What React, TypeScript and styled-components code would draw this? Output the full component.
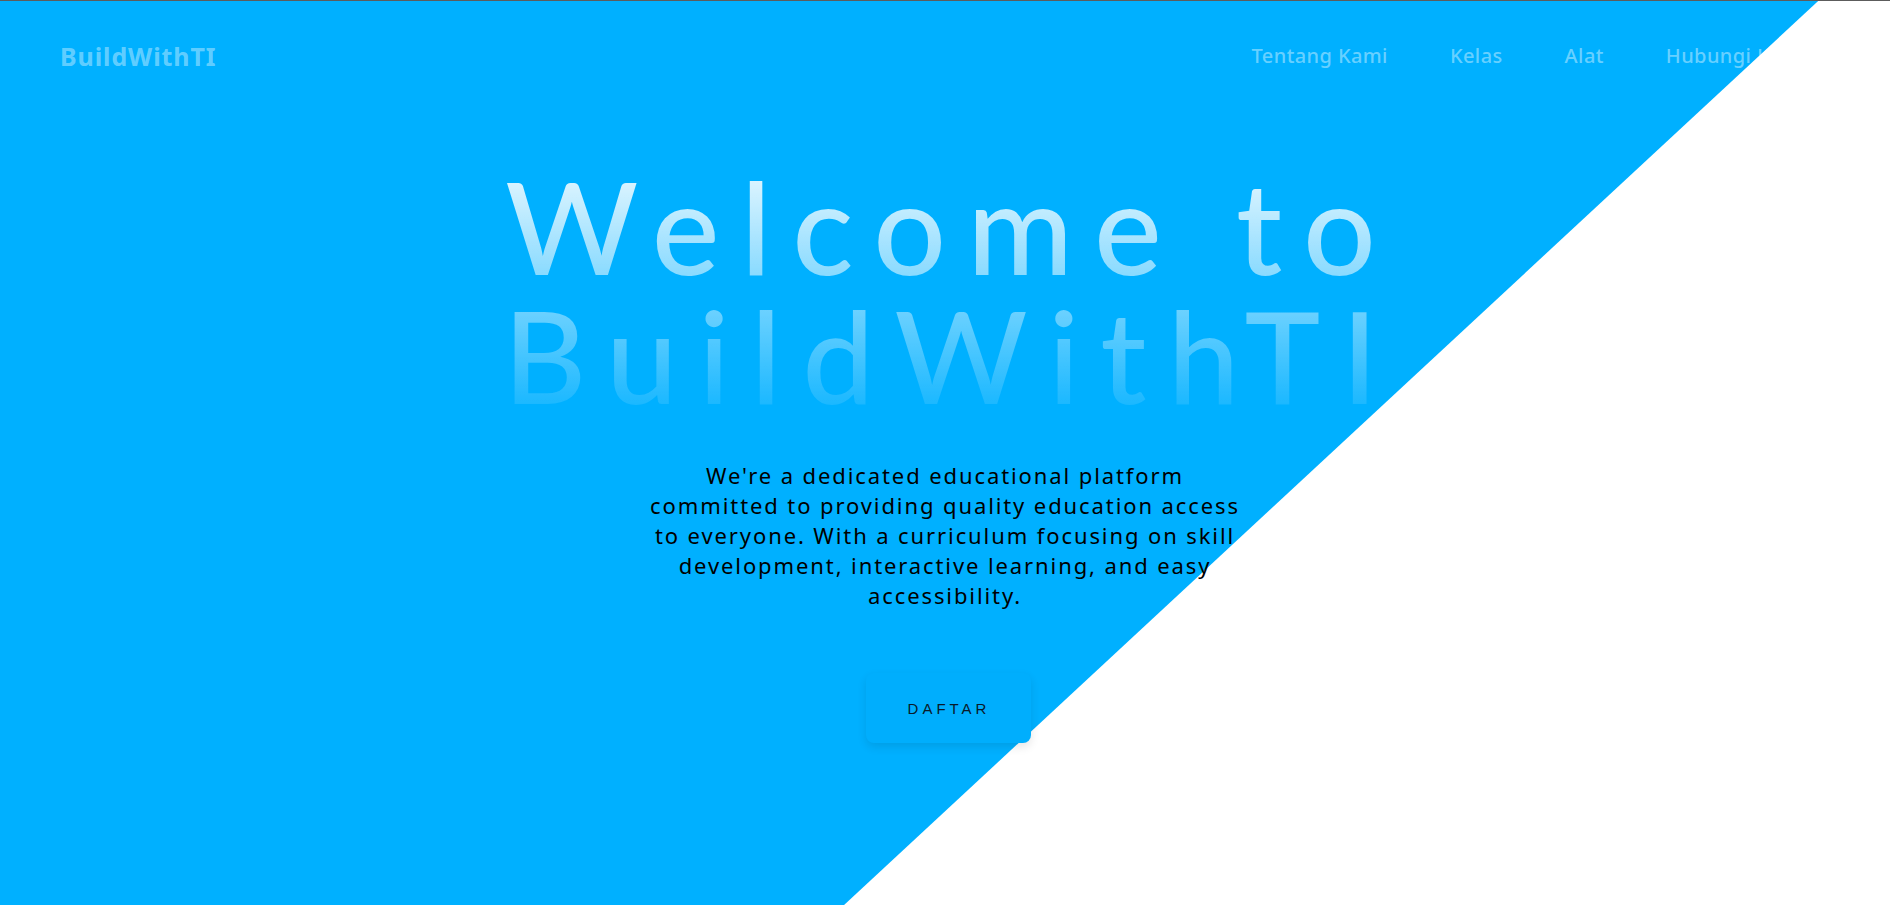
import React from "react";
import styled, { createGlobalStyle } from "styled-components";

const GlobalStyle = createGlobalStyle`
  *, *::before, *::after { box-sizing: border-box; }
  html, body { margin: 0; padding: 0; background: #ffffff; }
  body { font-family: "Lato", "Noto Sans", sans-serif; }
`;

const Hero = styled.section`
  position: relative;
  height: 905px;
  border-top: 1px solid #5c5c5c;
  overflow: hidden;
  display: flex;
  flex-direction: column;

  &::before {
    content: "";
    position: absolute;
    inset: 0;
    background: #00b0ff;
    clip-path: polygon(0 0, 96.2% 0, 44.66% 100%, 0 100%);
    z-index: 0;
  }
`;

const Nav = styled.nav`
  position: relative;
  z-index: 1;
  height: 109px;
  padding: 0 60px;
  display: flex;
  align-items: center;
  justify-content: space-between;
`;

const Logo = styled.a`
  font-family: "Noto Sans", sans-serif;
  font-weight: 700;
  font-size: 25px;
  letter-spacing: 0.9px;
  color: rgba(255, 255, 255, 0.4);
  text-decoration: none;
`;

const Links = styled.ul`
  list-style: none;
  margin: 0;
  padding: 0 23px 0 0;
  display: flex;
  gap: 62px;
`;

const LinkItem = styled.li`
  font-family: "Noto Sans", sans-serif;
  font-weight: 500;
  font-size: 20px;
  letter-spacing: 0.4px;
  color: rgba(255, 255, 255, 0.42);
`;

const Content = styled.main`
  position: relative;
  z-index: 1;
  display: flex;
  flex-direction: column;
  align-items: center;
  padding-top: 51px;
`;

const Title = styled.h1`
  margin: 0;
  font-family: "Lato", "Noto Sans", sans-serif;
  font-weight: 500;
  font-size: 128px;
  line-height: 129px;
  letter-spacing: 21px;
  padding-left: 12px;
  text-align: center;
  background: linear-gradient(
    to bottom,
    rgba(255, 255, 255, 0.92),
    rgba(255, 255, 255, 0.06)
  );
  -webkit-background-clip: text;
  background-clip: text;
  color: transparent;
`;

const Lead = styled.p`
  margin: 41px 0 0;
  max-width: 610px;
  font-family: "Noto Sans", sans-serif;
  font-size: 22px;
  line-height: 30px;
  letter-spacing: 1.9px;
  text-align: center;
  color: #000;
`;

const CTA = styled.button`
  margin: 63px 0 0 6px;
  width: 165px;
  height: 70px;
  border: none;
  border-radius: 8px;
  background: #00aefd;
  box-shadow: 0 4px 10px rgba(0, 0, 0, 0.1);
  font-family: "Liberation Sans", Arial, sans-serif;
  font-size: 15px;
  letter-spacing: 4px;
  padding-left: 8px;
  color: #0a1a2a;
  cursor: pointer;
`;

export default function App() {
  return (
    <>
      <GlobalStyle />
      <Hero>
        <Nav>
          <Logo href="#">BuildWithTI</Logo>
          <Links>
            <LinkItem>Tentang Kami</LinkItem>
            <LinkItem>Kelas</LinkItem>
            <LinkItem>Alat</LinkItem>
            <LinkItem>Hubungi Kami</LinkItem>
          </Links>
        </Nav>
        <Content>
          <Title>
            Welcome to
            <br />
            BuildWithTI
          </Title>
          <Lead>
            We're a dedicated educational platform committed to providing
            quality education access to everyone. With a curriculum focusing on
            skill development, interactive learning, and easy accessibility.
          </Lead>
          <CTA>DAFTAR</CTA>
        </Content>
      </Hero>
    </>
  );
}
